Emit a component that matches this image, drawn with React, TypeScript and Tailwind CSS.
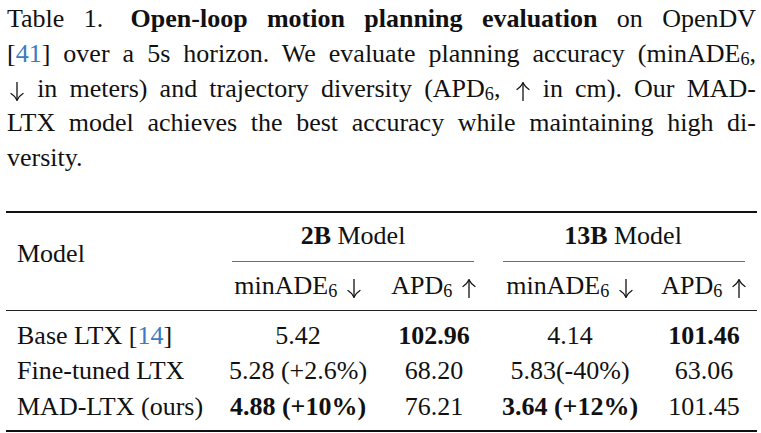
import React from "react";

const Cite = ({ n }: { n: string }) => (
  <>
    [<span className="text-[#3a7cbf]">{n}</span>]
  </>
);

const Sub6 = () => <span className="relative top-[3px] text-[0.7em] leading-[0]">6</span>;

const Arrow = ({ up }: { up?: boolean }) => (
  <svg
    viewBox="0 0 14 19"
    className="inline-block w-[14px] h-[19px] align-[-4px] ml-[3px] mr-[1px]"
    fill="none"
    stroke="#111"
    strokeWidth="1.3"
    strokeLinecap="round"
  >
    {up ? (
      <>
        <line x1="7" y1="1" x2="7" y2="18.5" />
        <path d="M1 7.5 Q5 5 7 0.8 Q9 5 13 7.5" />
      </>
    ) : (
      <>
        <line x1="7" y1="0.5" x2="7" y2="18" />
        <path d="M1 11.5 Q5 14 7 18.2 Q9 14 13 11.5" />
      </>
    )}
  </svg>
);

const lineCls = "text-justify [text-align-last:justify] whitespace-nowrap";

export default function App() {
  const rows = [
    {
      name: (
        <>
          Base LTX <Cite n="14" />
        </>
      ),
      c: [
        { t: "5.42" },
        { t: "102.96", b: true },
        { t: "4.14" },
        { t: "101.46", b: true },
      ],
    },
    {
      name: <>Fine-tuned LTX</>,
      c: [{ t: "5.28 (+2.6%)" }, { t: "68.20" }, { t: "5.83(-40%)" }, { t: "63.06" }],
    },
    {
      name: <>MAD-LTX (ours)</>,
      c: [
        { t: "4.88 (+10%)", b: true },
        { t: "76.21" },
        { t: "3.64 (+12%)", b: true },
        { t: "101.45" },
      ],
    },
  ];

  return (
    <div className="w-[761px] h-[433px] overflow-hidden bg-white text-[#111] [font-family:Liberation_Serif,Times_New_Roman,serif] text-[26px]">
      {/* Caption */}
      <div className="pt-[2px] pl-[7px] pr-[5px] leading-[34.8px]">
        <div className={lineCls}>
          Table 1.<span className="inline-block w-[8px]"></span>{" "}
          <b>Open-loop motion planning evaluation</b> on OpenDV
        </div>
        <div className={lineCls}>
          <Cite n="41" /> over a 5s horizon. We evaluate planning accuracy (minADE
          <Sub6 />,
        </div>
        <div className={lineCls}>
          <Arrow /> in meters) and trajectory diversity (APD
          <Sub6 />, <Arrow up /> in cm). Our MAD-
        </div>
        <div className={lineCls}>
          LTX model achieves the best accuracy while maintaining high di-
        </div>
        <div>versity.</div>
      </div>

      {/* Table */}
      <div className="mt-[35px] ml-[6px] mr-[4px]">
        <div className="h-[2px] bg-[#111]" />
        {/* Header */}
        <div className="flex">
          <div className="w-[211px] pl-[11px] pt-[23px] leading-[35px]">Model</div>
          <div className="w-[272px]">
            <div className="h-[46px] leading-[46px] text-center">
              <b>2B</b> Model
            </div>
            <div className="mt-[2px] h-[1px] mx-[15px] bg-[#6e6e6e]" />
            <div className="grid grid-cols-[162px_110px] h-[48px] leading-[48px] text-center">
              <div>
                minADE
                <Sub6 /> <Arrow />
              </div>
              <div>
                APD
                <Sub6 /> <Arrow up />
              </div>
            </div>
          </div>
          <div className="w-[268px]">
            <div className="h-[46px] leading-[46px] text-center">
              <b>13B</b> Model
            </div>
            <div className="mt-[2px] h-[1px] ml-[14px] mr-[12px] bg-[#6e6e6e]" />
            <div className="grid grid-cols-[162px_106px] h-[48px] leading-[48px] text-center">
              <div>
                minADE
                <Sub6 /> <Arrow />
              </div>
              <div>
                APD
                <Sub6 /> <Arrow up />
              </div>
            </div>
          </div>
        </div>
        <div className="h-[1.5px] bg-[#222]" />
        {/* Body */}
        <div className="pt-[6.5px] pb-[6px]">
          {rows.map((r, i) => (
            <div
              key={i}
              className="grid grid-cols-[211px_162px_110px_162px_106px] h-[35.5px] leading-[35.5px]"
            >
              <div className="pl-[11px] whitespace-nowrap">{r.name}</div>
              {r.c.map((c, j) => (
                <div key={j} className={`text-center whitespace-nowrap ${c.b ? "font-bold" : ""}`}>
                  {c.t}
                </div>
              ))}
            </div>
          ))}
        </div>
        <div className="h-[2px] bg-[#111]" />
      </div>
    </div>
  );
}
